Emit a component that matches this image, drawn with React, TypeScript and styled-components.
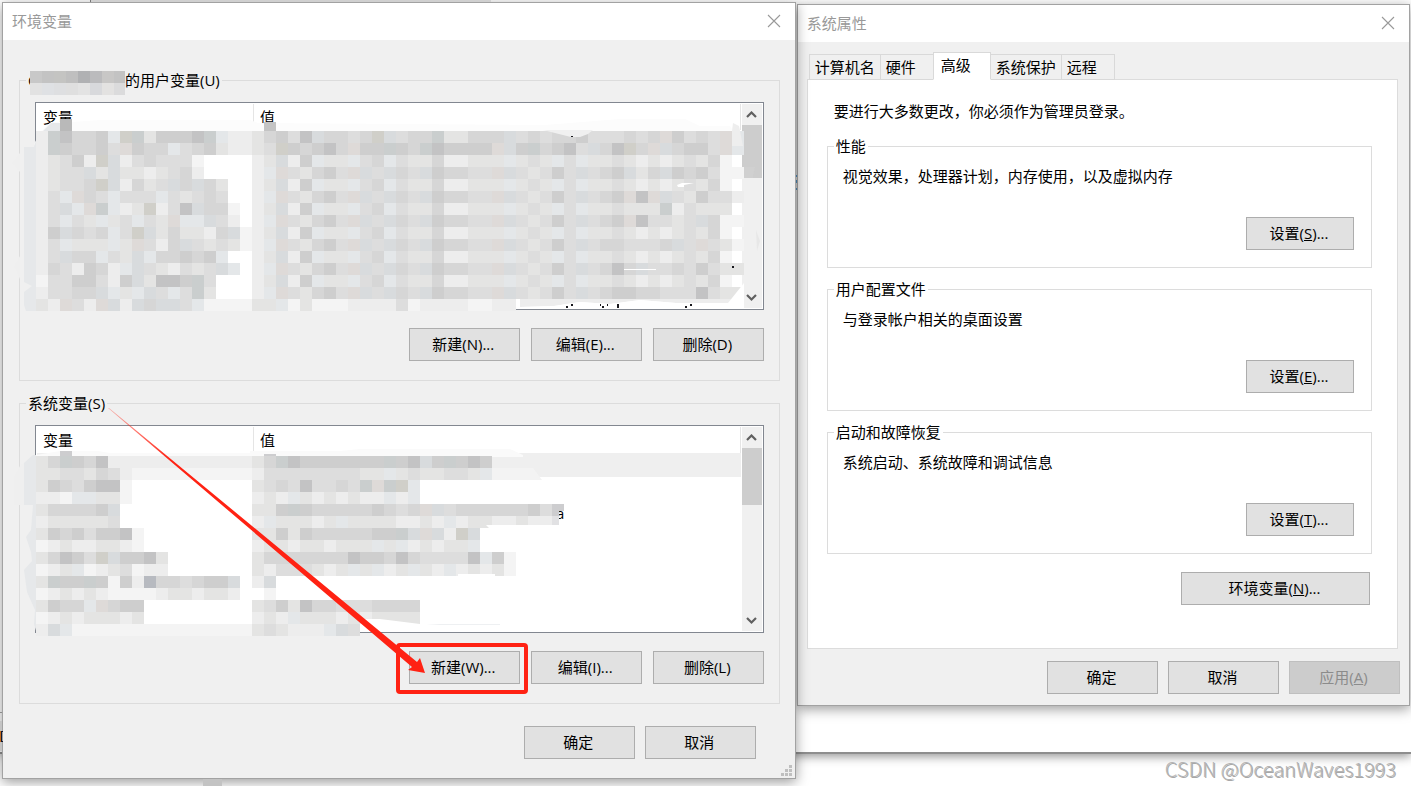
import React from 'react';
import styled, { createGlobalStyle, css } from 'styled-components';

const GlobalStyle = createGlobalStyle`
  *, *::before, *::after { box-sizing: border-box; }
  body {
    margin: 0;
    background: #fff;
    color: #000;
    font-family: 'Open Sans', 'Noto Sans CJK SC', sans-serif;
    font-size: 15px;
    line-height: 20px;
  }
  button { font: inherit; color: inherit; margin: 0; padding: 0; }
`;

const Desktop = styled.main`
  position: relative;
  display: flex;
  align-items: flex-start;
  gap: 1px;
  min-height: 100vh;
  padding: 2px 1px 0 2px;
  overflow: hidden;
  isolation: isolate;
`;

/* Window that lies behind the two dialogs */
const BackWindow = styled.div`
  position: absolute;
  z-index: -1;
  top: 0;
  left: 0;
  right: 0;
  height: 754px;
  background: #fff;
  border-bottom: 2px solid #8e8e8e;
  box-shadow: 0 2px 10px rgba(0, 0, 0, 0.45);
`;

const BackScraps = styled.svg`
  position: absolute;
  z-index: 3;
  top: 0;
  left: 0;
  width: 800px;
  height: 786px;
  pointer-events: none;
`;

const Dialog = styled.section<{ $grow: number; $front?: boolean }>`
  position: relative;
  z-index: ${(p) => (p.$front ? 2 : 1)};
  flex: ${(p) => p.$grow} 1 0;
  min-width: 0;
  margin-top: ${(p) => (p.$front ? 0 : 2)}px;
  border: 1px solid #a2a2a2;
  background: #f0f0f0;
  box-shadow: 0 3px 12px rgba(0, 0, 0, 0.4);
`;

const TitleBar = styled.header`
  display: flex;
  align-items: center;
  justify-content: space-between;
  height: 37px;
  padding: 0 14px 2px 9px;
  background: #fff;
`;

const Title = styled.h1`
  margin: 0;
  font-size: 15px;
  font-weight: 400;
  line-height: 20px;
  color: #999;
`;

const CloseButton = styled.button`
  display: flex;
  border: 0;
  background: none;
`;

const EnvBody = styled.div`
  display: flex;
  flex-direction: column;
  gap: 12px;
  padding: 30px 15px 19px 16px;
`;

const Group = styled.fieldset`
  min-width: 0;
  margin: 0;
  padding: 12px 15px 19px;
  border: 1px solid #dcdcdc;
`;

const Legend = styled.legend`
  display: flex;
  height: 20px;
  margin-left: -9px;
  padding: 0 2px;
`;

const HiddenName = styled.span`
  position: relative;
  width: 97px;
  svg { position: absolute; left: 2px; top: 1px; }
`;

const ListBox = styled.div<{ $tint: string }>`
  position: relative;
  display: flex;
  height: 208px;
  padding: 1px;
  border: 1px solid ${(p) => p.$tint};
  background: #fff;
`;

const VarTable = styled.table`
  flex: 1;
  align-self: flex-start;
  table-layout: fixed;
  border-collapse: separate;
  border-spacing: 0;
`;

const HeadCell = styled.th<{ $first?: boolean }>`
  width: ${(p) => (p.$first ? '217px' : 'auto')};
  height: 26px;
  padding: 0 0 0 6px;
  border-right: 1px solid #e5e5e5;
  font-weight: 400;
  text-align: left;
`;

const VarRow = styled.tr<{ $selected?: boolean }>`
  background: ${(p) => (p.$selected ? '#efefef' : 'transparent')};
`;

const VarCell = styled.td<{ $tail?: boolean }>`
  height: 24px;
  padding: 0 0 0 ${(p) => (p.$tail ? 302 : 6)}px;
`;

const ScrollBar = styled.div`
  display: flex;
  flex-direction: column;
  width: 20px;
  margin-left: 1px;
  background: #f0f0f0;
`;

const ScrollButton = styled.button`
  display: flex;
  align-items: center;
  justify-content: center;
  height: 21px;
  border: 0;
  background: none;
`;

const Thumb = styled.div<{ $size: number }>`
  height: ${(p) => p.$size}px;
  margin-bottom: auto;
  background: #cdcdcd;
`;

const MosaicLayer = styled.svg`
  position: absolute;
  left: -36px;
  top: -4px;
  width: 760px;
  height: 220px;
  pointer-events: none;
`;

const Actions = styled.div<{ $kind: 'list' | 'env' | 'sys' }>`
  display: flex;
  justify-content: flex-end;
  gap: ${(p) => (p.$kind === 'list' ? 11 : 10)}px;
  ${(p) => p.$kind === 'list' && css`margin-top: 18px;`}
  ${(p) => p.$kind === 'env' && css`padding: 10px 24px 0 0;`}
  ${(p) => p.$kind === 'sys' && css`padding: 12px 9px 11px;`}
`;

const PushButton = styled.button<{ $width?: number }>`
  width: ${(p) => p.$width ?? 111}px;
  height: 33px;
  padding: 0 2px 2px 0;
  border: 1px solid #adadad;
  background: #e1e1e1;
  text-align: center;
  &:disabled { border-color: #bfbfbf; background: #ccc; color: #8b8b8b; }
`;

const Marked = styled.div`
  position: relative;
  display: flex;
`;

const Highlight = styled.div`
  position: absolute;
  inset: -8px -8px -10px -13px;
  border: 4px solid #ff2213;
  border-radius: 4px;
  pointer-events: none;
`;

const Arrow = styled.svg`
  position: absolute;
  left: -301px;
  top: -246px;
  width: 320px;
  height: 272px;
  pointer-events: none;
`;

const Grip = styled.svg`
  position: absolute;
  right: 3px;
  bottom: 2px;
`;

const SysBody = styled.div`
  padding: 9px 11px 0 9px;
`;

const Tabs = styled.div`
  display: flex;
  align-items: flex-end;
  height: 28px;
  padding-left: 2px;
`;

const Tab = styled.button<{ $active?: boolean }>`
  height: ${(p) => (p.$active ? 28 : 26)}px;
  min-width: ${(p) => (p.$active ? 58 : 54)}px;
  margin-bottom: -1px;
  margin-right: -1px;
  padding: 0 5px ${(p) => (p.$active ? 3 : 0)}px ${(p) => (p.$active ? 7 : 5)}px;
  border: 1px solid #d9d9d9;
  border-bottom-color: ${(p) => (p.$active ? '#fff' : '#d9d9d9')};
  background: ${(p) => (p.$active ? '#fff' : '#f0f0f0')};
  text-align: left;
  position: relative;
  z-index: ${(p) => (p.$active ? 1 : 0)};
`;

const Panel = styled.div`
  display: flex;
  flex-direction: column;
  padding: 21px 25px 43px 19px;
  border: 1px solid #dcdcdc;
  background: #fff;
`;

const Notice = styled.p`
  margin: 0 0 15px 7px;
`;

const Settings = styled.fieldset`
  display: flex;
  flex-direction: column;
  margin: 0 0 11px;
  padding: 10px 17px 17px 15px;
  border: 1px solid #dcdcdc;
`;

const SettingsLegend = styled.legend`
  margin-left: -9px;
  padding: 0 2px;
`;

const SettingsText = styled.p`
  margin: 0 0 31px;
`;

const Right = styled.div<{ $edge?: boolean }>`
  display: flex;
  justify-content: flex-end;
  padding: ${(p) => (p.$edge ? '7px 2px 0 0' : '0')};
`;

const Watermark = styled.footer`
  position: absolute;
  right: 15px;
  top: 756px;
  color: #b4b4b4;
  font-family: 'Noto Sans CJK SC', sans-serif;
  font-size: 20px;
  font-weight: 300;
  line-height: 26px;
  text-shadow: 1px 1px 0 #a8a8a8;
`;

/* Colour of one 12px tile of the pixelated areas */
const TILE: Record<string, string> = {
  a: '#c3c3c4', b: '#cecece', c: '#d6d6d6', d: '#dddddd', e: '#e4e4e3', f: '#ededed',
  g: '#f4f4f4', t: '#cacece', u: '#d8dbdd', v: '#e4e7e9', p: '#dedad8', y: '#d0cfc9', s: '#b7bac0',
};

const USER_KEYS = [
  'ftaccbvytebbbatvff', 'ftbccbdpbccvdcbeff', 'fedbfyufdcdddg', 'feddueueefedcf',
  'feddcyufceducuce', 'fdvpcdvdddvdedcd', 'fduvptvfeyfdauccg', 'fdvdevedvdepvvudf',
  'fbucdcvdyueceefcug', 'fdveeevepdfcudedeg', 'fduccvdeuvccbcbv', 'fcdfbcfvudefdeduv',
  'gddbbdfbueaabtd', 'fddccuvevudvdte', 'efpdfpufucuudvgggg',
];
const EVEN = 'feufbveevdcvdeecffeeevedevdveedefefedecg.';
const ODD = 'fvpdecbdpuducdubccddpudedbdudcbuecubcbdgg';
const USER_VALUES = [
  'ecbdauccdcyudccteecccudcdccbdddcdcpbdcdpv', 'edybcbacpbbtbctabbbbpubtcbaducaycpucbbdpv',
  EVEN, ODD, EVEN, 'fvpdecbdpuducdubccddpudedbdudcbpapudebddf',
  'feufbveevdcvdeecffeeevedevdveedeeetfdeee.', 'fvpdecbdpuducdubccddpudedbdudcbpaddeducgg',
  EVEN, 'fvpdecbdpuducdubccddpudedbdudccdddcudpdeg', EVEN, 'fvpdecbdpuducdubccddpudedbdudcacuddcdbdee',
  EVEN, 'fvpdecbdpuducdubccddpudedbdudcbbccdddadee', 'eevgegggffffdgffffggff',
];
const SYS_KEYS = [
  'ectbcafaffffffffff'.replace('fa', 'ff'), 'eeddecdfgggggggggg', 'ebcdbaag', 'ffgvveeg', 'eccccbu', 'feeeeed', 'ebcbdbbag', 'gfeffeefg',
  'ecabdyubbae', 'gfevgfedgff', 'etbbtbgbfsccdcbbu', 'gfefefggggfeefeef', 'ebccvpcbb', 'gfefeeefe', 'fuvggggggggggggggg',
];
const SYS_VALUES = [
  'ectabbbbbbbtbaubtbab', 'fddddddddeevedeeddev', 'edcdaddcdtptyv', 'fefvefefeffvfv', 'eebtbcccccbcdcpudccccccbd', 'fveeefeveeeeffefvfeeffeff',
  'eebebcccccbbtupufyu', 'feefeefeeevevfefeev', 'ecccccccabbcacddddavbg', 'efdddefevevfevefvfefeg', 'fu', '.g', 'edbeaccdddcccc', 'fefveeefefeeee', 'edefffvud',
];

function Tiles({ keys, values, y }: { keys: string[]; values: string[]; y: number }) {
  return (
    <g shapeRendering="crispEdges">
      {keys.map((key, r) =>
        (key.padEnd(18, '.') + (values[r] ?? '')).slice(0, 59).split('').map((tile, c) =>
          TILE[tile] ? (
            <rect key={`${r}-${c}`} x={36 + c * 12} y={y + r * 12} width={12} height={12} fill={TILE[tile]} />
          ) : null,
        ),
      )}
    </g>
  );
}

function UserMosaic() {
  return (
    <MosaicLayer viewBox="0 100 760 220" aria-hidden="true">
      <path d="M34 146L39 134L51 123H73L100 121H250L258 124L545 126L620 120H685L700 127H730L741 145H34Z" fill="#fcfcfc" />
      <path d="M24 148H34L37 138L51 124H60V132H48V312H26L24 306V293L32 287L24 283Z" fill="#e6e8ea" />
      <path d="M20 154L12 164L20 173ZM20 257L14 267L20 280Z" fill="#efefef" />
      <Tiles keys={USER_KEYS} values={USER_VALUES} y={132} />
      <path d="M60 120H72V132H60Z" fill="#b9b9b9" />
      <path d="M264 123H276V132H264Z" fill="#c4c4c4" />
      <path d="M543 131H593L588 135L580 138H571Z" fill="#f0f0f0" />
      <path d="M677 186L682 184H694L684 186V188H678ZM624 270H656V271H624Z" fill="#fff" />
      <path d="M733 124L739 127L743 147H732V132Z" fill="#eee" />
      <path d="M744 179H753V177L755 168H744Z" fill="#d0d0d0" />
      <path d="M756 231L760 242L757 252Z" fill="#e7e7e7" />
      <path d="M520 300H732V304H728L676 304L640 301L610 305L580 303L554 307L520 308Z" fill="#ededed" />
      <path d="M520 308L554 307L580 303L610 305L640 301L676 304L728 304L744 284V309H520Z" fill="#fff" />
      <path d="M571 137H573V138H571ZM732 267H734V269H732ZM566 307H568V309H566ZM571 305H573V307H571ZM600 305H601V307H600ZM602 307H604V309H602ZM607 305H608V307H607ZM617 305H619V309H617ZM685 307H687V309H685ZM690 305H692V307H690Z" fill="#17171c" />
    </MosaicLayer>
  );
}

function SystemMosaic() {
  return (
    <MosaicLayer viewBox="0 422 760 220" aria-hidden="true">
      <path d="M33 455L24 463V505H33L31 530L26 537L31 552L32 561L24 570L27 592L35 610L34 624L37 634H48V455Z" fill="#e6e8ea" />
      <path d="M20 466L14 476V505H24V463Z" fill="#efefef" />
      <path d="M36 455L60 451H98L110 453H250V451H340L360 449H510L523 455V457H36Z" fill="#fafafa" />
      <path d="M492 468H533L542 480H492Z" fill="#f3f3f3" />
      <Tiles keys={SYS_KEYS} values={SYS_VALUES} y={456} />
      <path d="M60 451H72V456H60ZM264 454H276V456H264ZM552 504H564V511H559V516H552Z" fill="#cdcdcf" />
      <path d="M552 516H559V525H552Z" fill="#e1e1e3" />
      <path d="M486 525H552V528H489ZM361 619H380L420 624V632H361ZM458 574H495V576H458Z" fill="#fff" />
      <path d="M426 624H500V625H440Z" fill="#eef0f2" />
    </MosaicLayer>
  );
}

function Chevron({ up }: { up?: boolean }) {
  return (
    <svg width="11" height="8" viewBox="0 0 11 8" aria-hidden="true">
      <path d={up ? 'M1 6L5.500 1.500L10 6' : 'M1 1L5.500 5.500L10 1'} fill="none" stroke="#606060" strokeWidth="2.200" />
    </svg>
  );
}

function Close() {
  return (
    <CloseButton type="button" aria-label="关闭">
      <svg width="14" height="14" viewBox="0 0 14 14" aria-hidden="true">
        <path d="M1 1L13 13M13 1L1 13" stroke="#999" strokeWidth="1.100" />
      </svg>
    </CloseButton>
  );
}

interface ListProps {
  tint: string;
  thumb: number;
  selected?: boolean;
  tail?: string;
  children: React.ReactNode;
}

function VariableList({ tint, thumb, selected, tail, children }: ListProps) {
  return (
    <ListBox $tint={tint}>
      <VarTable>
        <thead>
          <tr>
            <HeadCell $first scope="col">变量</HeadCell>
            <HeadCell scope="col">值</HeadCell>
          </tr>
        </thead>
        <tbody>
          {[0, 1, 2, 3, 4, 5, 6].map((n) => (
            <VarRow key={n} $selected={selected && n === 0}>
              <VarCell />
              <VarCell $tail={n === 2}>{n === 2 ? tail : null}</VarCell>
            </VarRow>
          ))}
        </tbody>
      </VarTable>
      <ScrollBar>
        <ScrollButton type="button" aria-label="向上滚动"><Chevron up /></ScrollButton>
        <Thumb $size={thumb} />
        <ScrollButton type="button" aria-label="向下滚动"><Chevron /></ScrollButton>
      </ScrollBar>
      {children}
    </ListBox>
  );
}

const NAME_TILES = ['#c8c8c8', '#c3c3c3', '#c4c4c2', '#bfbfbf', '#b0b1b3', '#bbbbbd', '#c8c7c6', '#c3c3c3'];
const NAME_TILES_LOW = ['#e2e2e2', '#dfe1e4', '#dedfe1', '#dfdfdf', '#e3e3e3', '#d8d9dc', '#e3e2e1', '#dbdbdc'];

function EnvironmentDialog() {
  return (
    <Dialog $grow={794} $front>
      <TitleBar>
        <Title>环境变量</Title>
        <Close />
      </TitleBar>
      <EnvBody>
        <Group>
          <Legend>
            <HiddenName>
              C
              <svg width="95" height="24" viewBox="0 0 95 24" aria-hidden="true">
                {NAME_TILES.map((fill, i) => <rect key={i} x={i * 12} width="12" height="12" fill={fill} />)}
                {NAME_TILES_LOW.map((fill, i) => <rect key={i} x={i * 12} y="12" width="12" height="12" fill={fill} />)}
              </svg>
            </HiddenName>
            的用户变量(U)
          </Legend>
          <VariableList tint="#828790" thumb={53}>
            <UserMosaic />
          </VariableList>
          <Actions $kind="list">
            <PushButton type="button">新建(N)...</PushButton>
            <PushButton type="button">编辑(E)...</PushButton>
            <PushButton type="button">删除(D)</PushButton>
          </Actions>
        </Group>
        <Group>
          <Legend>系统变量(S)</Legend>
          <VariableList tint="#828790" thumb={57} selected tail="a">
            <SystemMosaic />
          </VariableList>
          <Actions $kind="list">
            <Marked>
              <PushButton type="button">新建(W)...</PushButton>
              <Highlight />
              <Arrow viewBox="108 405 320 272" aria-hidden="true">
                <defs>
                  <linearGradient id="shaft" gradientUnits="userSpaceOnUse" x1="108" y1="408" x2="170" y2="460">
                    <stop offset="0" stopColor="#ff2213" stopOpacity="0.300" />
                    <stop offset="1" stopColor="#ff2213" />
                  </linearGradient>
                </defs>
                <path d="M108 408L109 408L417 662L420 658L425 673L408 670L412 667Z" fill="url(#shaft)" />
              </Arrow>
            </Marked>
            <PushButton type="button">编辑(I)...</PushButton>
            <PushButton type="button">删除(L)</PushButton>
          </Actions>
        </Group>
        <Actions $kind="env">
          <PushButton type="button">确定</PushButton>
          <PushButton type="button">取消</PushButton>
        </Actions>
      </EnvBody>
      <Grip width="11" height="11" viewBox="0 0 11 11" aria-hidden="true">
        <path d="M8 0h3v3h-3zM4 4h3v3h-3zM8 4h3v3h-3zM0 8h3v3h-3zM4 8h3v3h-3zM8 8h3v3h-3z" fill="#bfbfbf" />
      </Grip>
    </Dialog>
  );
}

const SETTINGS = [
  { title: '性能', text: '视觉效果，处理器计划，内存使用，以及虚拟内存', accessKey: 'S' },
  { title: '用户配置文件', text: '与登录帐户相关的桌面设置', accessKey: 'E' },
  { title: '启动和故障恢复', text: '系统启动、系统故障和调试信息', accessKey: 'T' },
];

function SystemDialog() {
  return (
    <Dialog $grow={613}>
      <TitleBar>
        <Title>系统属性</Title>
        <Close />
      </TitleBar>
      <SysBody>
        <Tabs role="tablist">
          {['计算机名', '硬件', '高级', '系统保护', '远程'].map((name) => (
            <Tab key={name} type="button" role="tab" aria-selected={name === '高级'} $active={name === '高级'}>
              {name}
            </Tab>
          ))}
        </Tabs>
        <Panel role="tabpanel">
          <Notice>要进行大多数更改，你必须作为管理员登录。</Notice>
          {SETTINGS.map((group) => (
            <Settings key={group.title}>
              <SettingsLegend>{group.title}</SettingsLegend>
              <SettingsText>{group.text}</SettingsText>
              <Right>
                <PushButton type="button" $width={108}>设置(<u>{group.accessKey}</u>)...</PushButton>
              </Right>
            </Settings>
          ))}
          <Right $edge>
            <PushButton type="button" $width={189}>环境变量(<u>N</u>)...</PushButton>
          </Right>
        </Panel>
      </SysBody>
      <Actions $kind="sys">
        <PushButton type="button">确定</PushButton>
        <PushButton type="button">取消</PushButton>
        <PushButton type="button" disabled>应用(<u>A</u>)</PushButton>
      </Actions>
    </Dialog>
  );
}

export default function App() {
  return (
    <>
      <GlobalStyle />
      <Desktop>
        <BackWindow />
        <EnvironmentDialog />
        <SystemDialog />
        <BackScraps viewBox="0 0 800 786" aria-hidden="true">
          <path d="M90 0H491V2H90Z" fill="#d0d0d0" />
          <path d="M90 0H91V2H90Z" fill="#777" />
          <path d="M0 712H2V713H0Z" fill="#8a8a8a" />
          <path d="M0 721H2V751H0Z" fill="#c3c3c3" />
          <path d="M0 731H1V742H0Z" fill="#c46a1c" />
          <path d="M1 731H3V732H2V741H3V742H1Z" fill="#111a33" />
          <path d="M203 779H222V786H203Z" fill="#c3c3c3" />
          <path d="M796 175h1v2h-1zM796 180h1v3h-1zM796 188h1v2h-1z" fill="#3f7095" />
        </BackScraps>
        <Watermark>CSDN @OceanWaves1993</Watermark>
      </Desktop>
    </>
  );
}
